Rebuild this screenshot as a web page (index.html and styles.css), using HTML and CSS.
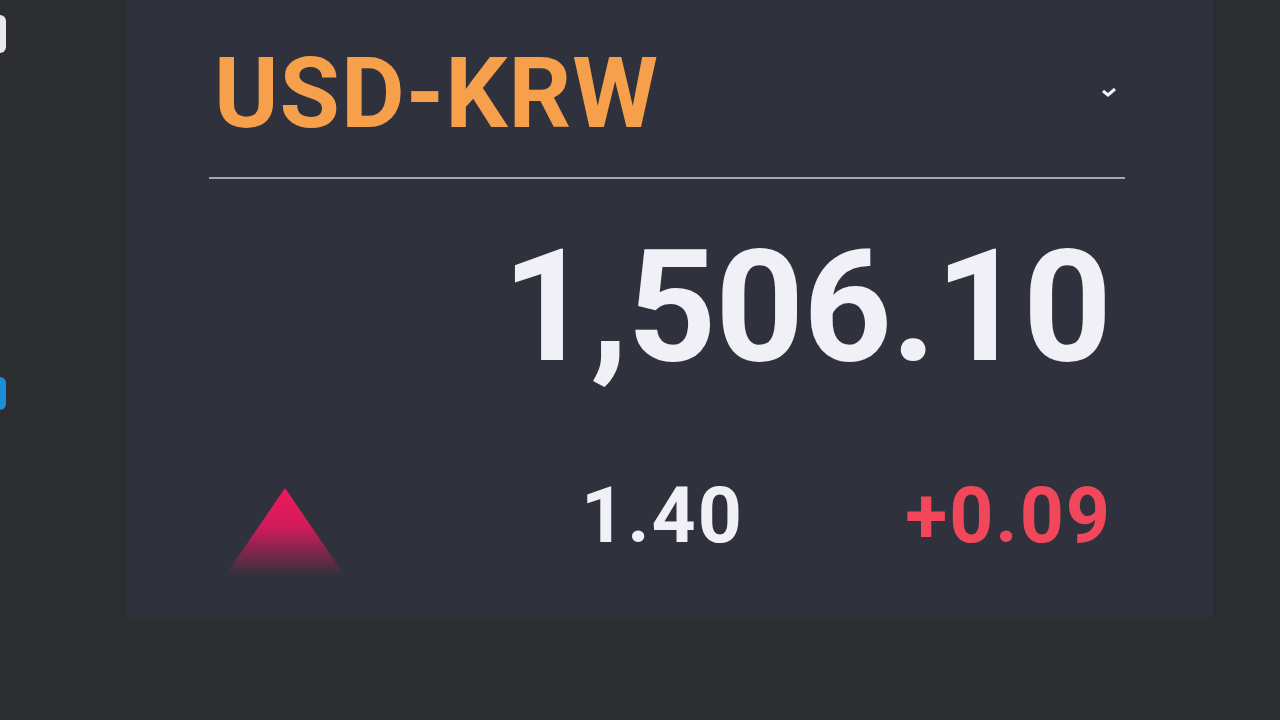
FILE: index.html
```html
<!DOCTYPE html>
<html lang="ko">
<head>
    <meta charset="UTF-8">
    <meta name="viewport" content="width=device-width, initial-scale=1.0">
    <title>USD-KRW</title>
    <link rel="stylesheet" href="styles.css">
</head>
<body>
    <div class="screen">
        <div class="side side-left">
            <span class="dot dot-white"></span>
            <span class="dot dot-blue"></span>
        </div>

        <div class="board">
            <div class="board-head">
                <h1 class="pair">USD-KRW</h1>
                <svg class="chevron" width="16" height="12" viewBox="0 0 16 12">
                    <path d="M2 5 L7 9 L14 3" fill="none" stroke="#f2f4fa" stroke-width="3" stroke-linejoin="miter"/>
                </svg>
            </div>

            <div class="price">1,506.10</div>

            <div class="change-row">
                <div class="arrow-up"></div>
                <div class="change">1.40</div>
                <div class="percent">+0.09</div>
            </div>
        </div>

        <div class="side side-right"></div>
    </div>
</body>
</html>
```

FILE: styles.css
```css
* {
    box-sizing: border-box;
}
html, body {
    margin: 0;
    height: 100%;
    background-color: #2c2e31;
}
body {
    font-family: Roboto, "Noto Sans", Arial, sans-serif;
    overflow: hidden;
}
.screen {
    display: flex;
    height: 617px;
}
.side {
    flex: 1;
    background-color: #2c2d30;
}
.side-left {
    flex: 0 0 127px;
    position: relative;
}
.dot {
    position: absolute;
    left: -6px;
    width: 12px;
    border-radius: 6px;
}
.dot-white {
    top: 15px;
    height: 38px;
    background-color: #e8e8ee;
}
.dot-blue {
    top: 377px;
    height: 33px;
    background-color: #1a8fd8;
}
.board {
    flex: 0 0 1086px;
    background-color: #2f323c;
    padding: 0 88px 0 82px;
}
.board-head {
    display: flex;
    justify-content: space-between;
    align-items: flex-start;
    height: 179px;
    border-bottom: 2px solid #a5a7ac;
}
.pair {
    margin: 45px 0 0 5px;
    font-size: 98px;
    font-weight: 700;
    line-height: 1;
    letter-spacing: 1px;
    color: #f6a04b;
}
.chevron {
    margin: 86px 8px 0 0;
}
.price {
    text-align: right;
    padding-right: 14px;
    margin-top: 51px;
    font-size: 155px;
    font-weight: 700;
    line-height: 1;
    letter-spacing: -1px;
    color: #f0f0f6;
}
.change-row {
    display: flex;
    align-items: flex-start;
    margin-top: 93px;
    padding-right: 13px;
}
.arrow-up {
    width: 120px;
    height: 88px;
    margin: 10px 0 0 16px;
    background: linear-gradient(to bottom, #f0195f 0%, #d01b5a 45%, rgba(200, 30, 90, 0) 100%);
    clip-path: polygon(50% 0, 100% 100%, 0 100%);
}
.change {
    margin-left: 236px;
    font-size: 77px;
    font-weight: 700;
    line-height: 1;
    letter-spacing: 2px;
    color: #f0f0f6;
}
.percent {
    margin-left: auto;
    font-size: 77px;
    font-weight: 700;
    line-height: 1;
    letter-spacing: 2px;
    color: #f2475b;
}
```
